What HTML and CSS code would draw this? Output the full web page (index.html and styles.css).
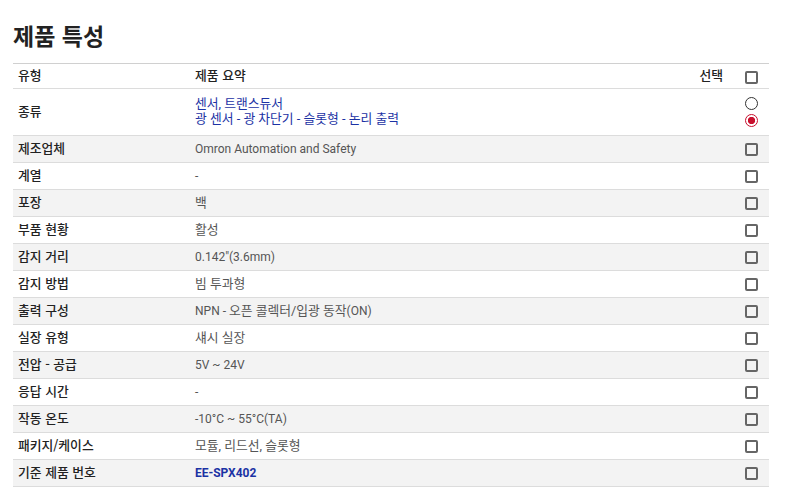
FILE: index.html
```html
<!DOCTYPE html>
<html lang="ko">
<head>
<meta charset="utf-8">
<title>제품 특성</title>
<link rel="stylesheet" href="styles.css">
</head>
<body>
<h1 class="title">제품 특성</h1>
<table class="spec">
  <thead>
    <tr class="head">
      <th class="c-label">유형</th>
      <th class="c-value">제품 요약</th>
      <th class="c-sel-label">선택</th>
      <th class="c-check"><span class="cb"></span></th>
    </tr>
  </thead>
  <tbody>
    <tr class="tall">
      <td class="c-label">종류</td>
      <td class="c-value ko" colspan="2"><a class="link" href="#">센서, 트랜스듀서</a><br><a class="link" href="#">광 센서 - 광 차단기 - 슬롯형 - 논리 출력</a></td>
      <td class="c-check"><span class="radios"><span class="radio"></span><span class="radio on"></span></span></td>
    </tr>
    <tr class="alt"><td class="c-label">제조업체</td><td class="c-value" colspan="2">Omron Automation and Safety</td><td class="c-check"><span class="cb"></span></td></tr>
    <tr><td class="c-label">계열</td><td class="c-value" colspan="2">-</td><td class="c-check"><span class="cb"></span></td></tr>
    <tr class="alt"><td class="c-label">포장</td><td class="c-value ko" colspan="2">백</td><td class="c-check"><span class="cb"></span></td></tr>
    <tr><td class="c-label">부품 현황</td><td class="c-value ko" colspan="2">활성</td><td class="c-check"><span class="cb"></span></td></tr>
    <tr class="alt"><td class="c-label">감지 거리</td><td class="c-value" colspan="2">0.142"(3.6mm)</td><td class="c-check"><span class="cb"></span></td></tr>
    <tr><td class="c-label">감지 방법</td><td class="c-value ko" colspan="2">빔 투과형</td><td class="c-check"><span class="cb"></span></td></tr>
    <tr class="alt"><td class="c-label">출력 구성</td><td class="c-value" colspan="2">NPN - <span class="ko">오픈 콜렉터/입광 동작</span>(ON)</td><td class="c-check"><span class="cb"></span></td></tr>
    <tr><td class="c-label">실장 유형</td><td class="c-value ko" colspan="2">섀시 실장</td><td class="c-check"><span class="cb"></span></td></tr>
    <tr class="alt"><td class="c-label">전압 - 공급</td><td class="c-value" colspan="2">5V ~ 24V</td><td class="c-check"><span class="cb"></span></td></tr>
    <tr><td class="c-label">응답 시간</td><td class="c-value" colspan="2">-</td><td class="c-check"><span class="cb"></span></td></tr>
    <tr class="alt"><td class="c-label">작동 온도</td><td class="c-value" colspan="2">-10°C ~ 55°C(TA)</td><td class="c-check"><span class="cb"></span></td></tr>
    <tr><td class="c-label">패키지/케이스</td><td class="c-value ko" colspan="2">모듈, 리드선, 슬롯형</td><td class="c-check"><span class="cb"></span></td></tr>
    <tr class="alt"><td class="c-label">기준 제품 번호</td><td class="c-value" colspan="2"><a class="link strong" href="#">EE-SPX402</a></td><td class="c-check"><span class="cb"></span></td></tr>
  </tbody>
</table>
</body>
</html>
```
FILE: styles.css
```css
* { box-sizing: border-box; }
body {
  margin: 0;
  padding: 0 16px 0 13px;
  background: #fff;
  font-family: Roboto, "Noto Sans CJK KR", sans-serif;
  color: #333;
}
.title {
  margin: 0;
  padding-top: 21px;
  height: 63px;
  font-family: "Noto Sans CJK KR", sans-serif;
  font-size: 23px;
  line-height: 28px;
  font-weight: 700;
  color: #222;
}
.spec {
  width: 756px;
  border-collapse: collapse;
  font-size: 12px;
}
.spec tr { height: 27px; border-bottom: 1px solid #dcdcdc; }
.spec tr.head { height: 25px; border-top: 1px solid #d0d0d0; }
.spec tr.tall { height: 47px; }
.spec tr.alt { background: #f3f3f3; }
.spec th, .spec td {
  padding: 0 5px;
  vertical-align: middle;
  text-align: left;
  line-height: 15px;
}
.spec th, .c-label {
  font-family: "Noto Sans CJK KR", sans-serif;
  font-size: 12.8px;
  font-weight: 500;
  color: #222;
}
.spec .c-label { width: 177px; padding-bottom: 3px; }
.spec th { padding-bottom: 3px; }
.c-value { color: #555; font-weight: 400; }
.ko { font-size: 12.8px; }
.spec td.ko { padding-bottom: 2px; }
.spec .c-sel-label { text-align: right; padding-right: 0; }
.spec .c-check {
  width: 46px;
  text-align: right;
  padding: 0 11px 0 0;
}
.cb {
  display: inline-block;
  width: 13px;
  height: 13px;
  border: 2px solid #666;
  border-radius: 2px;
  vertical-align: middle;
}
.radios {
  display: inline-flex;
  flex-direction: column;
  gap: 4px;
  vertical-align: middle;
  margin-top: 0;
}
.radio {
  display: block;
  width: 13px;
  height: 13px;
  border: 1px solid #333;
  border-radius: 50%;
}
.radio.on {
  border: 1.5px solid #c8102e;
  background: radial-gradient(circle, #c8102e 0 3.4px, #fff 3.9px);
}
.link { color: #1b32a4; text-decoration: none; }
.link.strong { font-weight: 700; }
```
